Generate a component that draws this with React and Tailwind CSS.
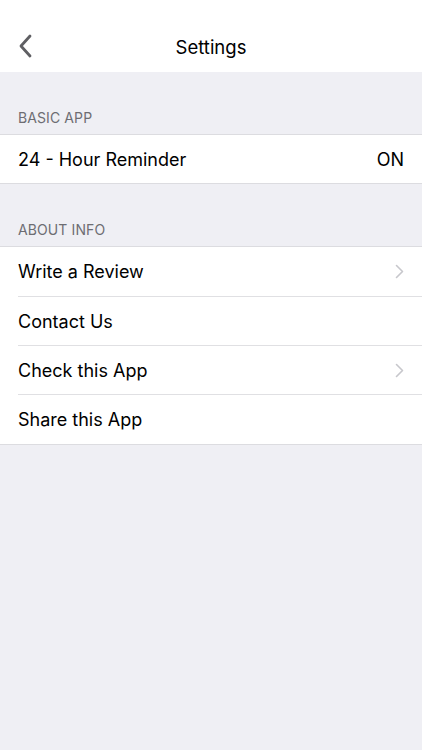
import React from "react";

const Chevron = () => (
  <svg width="9" height="15" viewBox="0 0 9 15" fill="none">
    <path d="M1.5 1.5 L7.5 7.5 L1.5 13.5" stroke="#c7c7cc" strokeWidth="1.6" strokeLinecap="round" strokeLinejoin="round" />
  </svg>
);

const Row = ({ label, right, chevron, h }) => (
  <div className={`flex items-center justify-between bg-white pl-[18px] pr-[18px] ${h}`}>
    <span className="text-[18px] text-black">{label}</span>
    {right && <span className="text-[18px] text-black">{right}</span>}
    {chevron && <Chevron />}
  </div>
);

const Sep = () => (
  <div className="bg-white pl-[18px]">
    <div className="h-px bg-[#e0e0e3]" />
  </div>
);

const SectionHeader = ({ title }) => (
  <div className="flex h-[63px] items-end border-b border-[#dcdce0] px-[18px] pb-[6px]">
    <span className="text-[14px] tracking-[0.1px] text-[#6d6d72]">{title}</span>
  </div>
);

export default function App() {
  return (
    <div className="min-h-[750px] w-[422px] bg-[#efeff4]" style={{ fontFamily: "Inter, 'Liberation Sans', sans-serif" }}>
      <div className="relative flex h-[72px] items-center justify-center bg-white">
        <div className="absolute left-[18px] top-[34px]">
          <svg width="16" height="24" viewBox="0 0 16 24" fill="none">
            <path d="M12 2 L3 12 L12 22" stroke="#5f5f63" strokeWidth="2.8" strokeLinecap="round" strokeLinejoin="round" />
          </svg>
        </div>
        <span className="pt-[24px] text-[18.5px] text-black">Settings</span>
      </div>
      <SectionHeader title="BASIC APP" />
      <div className="border-b border-[#dcdce0]">
        <Row label="24 - Hour Reminder" right="ON" h="h-[48px]" />
      </div>
      <SectionHeader title="ABOUT INFO" />
      <div className="border-b border-[#dcdce0]">
        <Row label="Write a Review" chevron h="h-[49px]" />
        <Sep />
        <Row label="Contact Us" h="h-[48px]" />
        <Sep />
        <Row label="Check this App" chevron h="h-[48px]" />
        <Sep />
        <Row label="Share this App" h="h-[49px]" />
      </div>
    </div>
  );
}
